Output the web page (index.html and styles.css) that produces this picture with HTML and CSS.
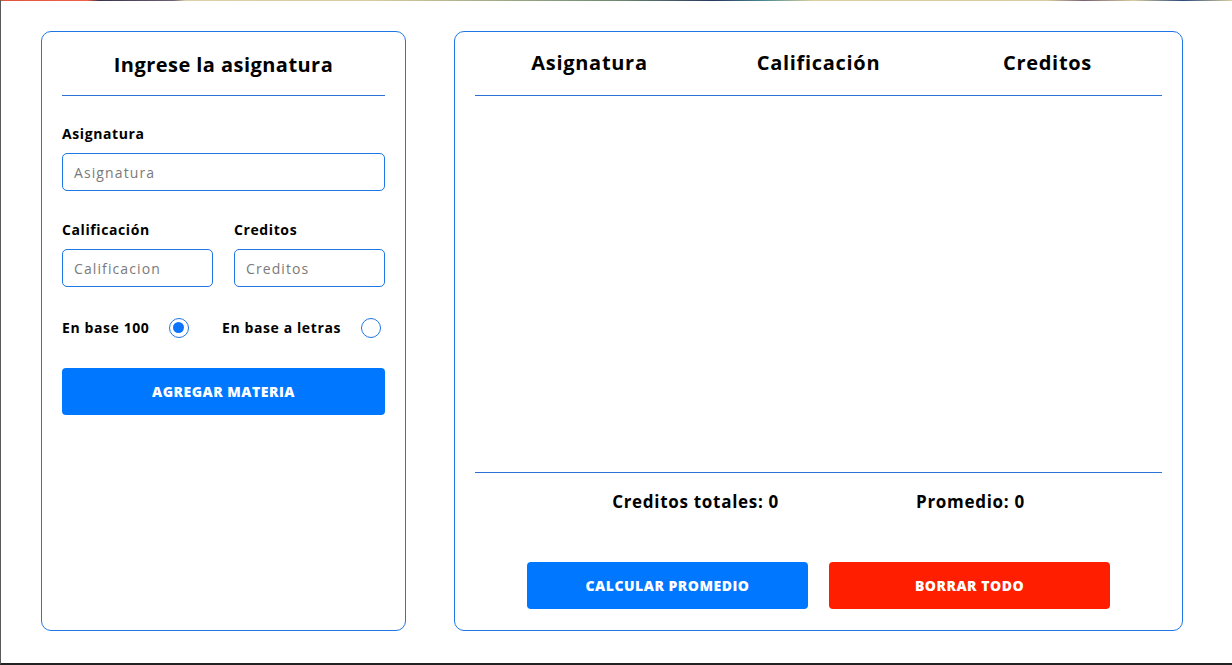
FILE: index.html
```html
<!DOCTYPE html>
<html lang="es">
<head>
<meta charset="utf-8">
<title>Promedio</title>
<link rel="stylesheet" href="styles.css">
</head>
<body>
<div class="frame">
  <div class="topstrip"></div>
  <main class="layout">
    <section class="card form-card">
      <h2 class="form-title">Ingrese la asignatura</h2>
      <hr class="rule">
      <label class="field-label first">Asignatura</label>
      <input class="field" type="text" placeholder="Asignatura">
      <div class="two-cols">
        <div class="col">
          <label class="field-label">Calificación</label>
          <input class="field" type="text" placeholder="Calificacion">
        </div>
        <div class="col">
          <label class="field-label">Creditos</label>
          <input class="field" type="text" placeholder="Creditos">
        </div>
      </div>
      <div class="radio-row">
        <div class="radio-item">
          <span class="radio-label">En base 100</span>
          <span class="radio checked"></span>
        </div>
        <div class="radio-item">
          <span class="radio-label">En base a letras</span>
          <span class="radio"></span>
        </div>
      </div>
      <button class="btn btn-blue wide">AGREGAR MATERIA</button>
    </section>

    <section class="card table-card">
      <div class="table-head">
        <div class="th">Asignatura</div>
        <div class="th">Calificación</div>
        <div class="th">Creditos</div>
      </div>
      <hr class="rule">
      <div class="table-body"></div>
      <hr class="rule">
      <div class="totals">
        <span>Creditos totales: 0</span>
        <span>Promedio: 0</span>
      </div>
      <div class="actions">
        <button class="btn btn-blue">CALCULAR PROMEDIO</button>
        <button class="btn btn-red">BORRAR TODO</button>
      </div>
    </section>
  </main>
</div>
</body>
</html>
```

FILE: styles.css
```css
* { box-sizing: border-box; }

html, body {
  margin: 0;
  padding: 0;
  background: #ffffff;
}

body {
  font-family: "Open Sans", "Noto Sans", Arial, sans-serif;
  color: #000;
}

.frame {
  width: 1232px;
  height: 665px;
  position: relative;
  border-left: 1px solid #5a5a5a;
  border-bottom: 2px solid #222;
  overflow: hidden;
}

.topstrip {
  height: 1px;
  background: linear-gradient(90deg, #e0553e 0%, #f26045 7%, #3a3352 8%, #6b6070 14%, #dcd1a8 15%, #d8cca0 30%, #6d8a70 50%, #263860 58%, #4b8a92 62%, #ddd0a0 66%, #d8cca0 85%, #7a6270 88%, #d8cda0 92%, #2c4a7a 96%, #dcd0a0 100%);
}

.layout {
  display: flex;
  gap: 48px;
  padding: 30px 0 0 40px;
}

.card {
  border: 1px solid #1f76e6;
  border-radius: 10px;
  height: 600px;
  background: #fff;
}

.form-card {
  width: 365px;
  padding: 18px 20px 20px 20px;
  display: flex;
  flex-direction: column;
}

.form-title {
  margin: 0;
  font-size: 20px;
  line-height: 30px;
  font-weight: 700;
  text-align: center;
  letter-spacing: 0.45px;
}

.rule {
  border: 0;
  height: 1px;
  background: #2a72d8;
  margin: 0;
}

.form-card .rule { margin-top: 15px; }

.field-label {
  display: block;
  font-size: 14px;
  line-height: 20px;
  font-weight: 700;
  letter-spacing: 0.6px;
  margin-bottom: 9px;
}

.field-label.first { margin-top: 28px; }

.field {
  display: block;
  width: 100%;
  height: 38px;
  border: 1px solid #1f76e6;
  border-radius: 5px;
  padding: 0 11px;
  font-family: inherit;
  font-size: 14px;
  letter-spacing: 1.1px;
  color: #333;
  background: #fff;
  outline: none;
}

.field::placeholder { color: #7a7a7a; }

.two-cols {
  display: grid;
  grid-template-columns: 151px 151px;
  justify-content: space-between;
  margin-top: 29px;
}

.radio-row {
  display: flex;
  justify-content: space-between;
  align-items: center;
  margin-top: 30px;
  height: 22px;
}

.radio-item {
  display: flex;
  align-items: center;
  gap: 20px;
}

.radio-label {
  font-size: 14px;
  font-weight: 700;
  line-height: 20px;
  letter-spacing: 0.6px;
}

.radio {
  width: 20px;
  height: 20px;
  border: 1px solid #1f76e6;
  border-radius: 50%;
  display: inline-block;
  position: relative;
  margin-right: 4px;
}

.radio.checked {
  border: 1.5px solid #1f76e6;
}

.radio.checked::after {
  content: "";
  position: absolute;
  left: 3px;
  top: 3px;
  width: 11px;
  height: 11px;
  border-radius: 50%;
  background: #0b74ff;
}

.btn {
  height: 47px;
  border: 0;
  border-radius: 4px;
  color: #fff;
  font-family: inherit;
  font-size: 14px;
  font-weight: 800;
  letter-spacing: 0.5px;
  cursor: pointer;
}

.btn-blue { background: #0077ff; }
.btn-red { background: #ff1e00; }

.wide {
  width: 100%;
  margin-top: 29px;
}

.table-card {
  width: 729px;
  padding: 15px 20px 21px 20px;
  display: flex;
  flex-direction: column;
}

.table-head {
  display: grid;
  grid-template-columns: 1fr 1fr 1fr;
  height: 32px;
  margin-bottom: 16px;
}

.th {
  text-align: center;
  font-size: 20px;
  font-weight: 700;
  line-height: 32px;
  letter-spacing: 0.7px;
}

.table-body { flex: 1; }

.totals {
  display: flex;
  justify-content: center;
  gap: 137px;
  font-size: 17px;
  font-weight: 700;
  line-height: 24px;
  letter-spacing: 0.7px;
  margin-top: 17px;
}

.actions {
  display: flex;
  justify-content: center;
  gap: 21px;
  margin-top: 48px;
}

.actions .btn { width: 281px; }
```
